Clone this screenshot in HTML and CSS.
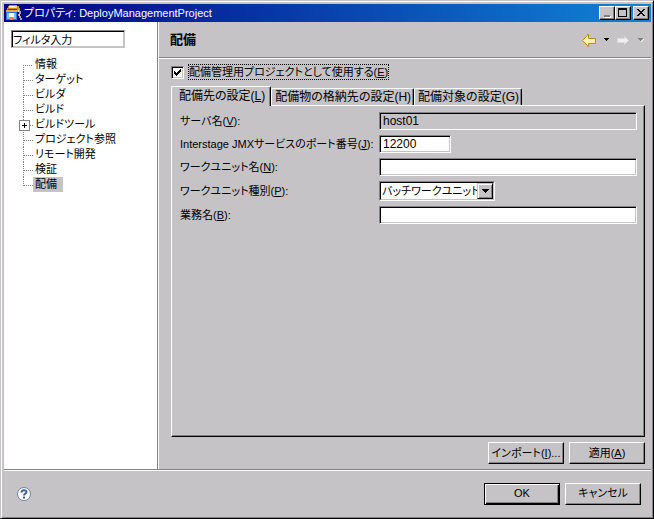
FILE: index.html
```html
<!DOCTYPE html>
<html lang="ja">
<head>
    <meta charset="UTF-8">
    <meta name="viewport" content="width=device-width, initial-scale=1.0">
    <title>プロパティ: DeployManagementProject</title>
    <link rel="stylesheet" href="styles.css">
</head>
<body>
    <div class="window">
        <header class="titlebar">
            <svg class="app-icon" width="16" height="16" viewBox="0 0 16 16" shape-rendering="crispEdges" aria-hidden="true">
                <path fill="#c89020" d="M3 0h8v1h2v2h1v3H1V3h1V1h1z"/>
                <path fill="#f8e080" d="M3 1h8v2H3z"/>
                <path fill="#fff8d0" d="M4 1h5v1H4z"/>
                <path fill="#604010" d="M2 4h9v1H2z"/>
                <path fill="#f0a840" d="M0 5h11v2H0z"/>
                <path fill="#2878d8" d="M0 7h11v8H0z"/>
                <path fill="#70c0f8" d="M1 8h9v6H1z"/>
                <path fill="#fff" d="M3 8h5v4H3z"/>
                <path fill="#e88820" d="M4 12h3v3H4z"/>
                <path fill="#a0a0a0" d="M11 4h3v2h1v3h-2V7h-2zM12 9h2v2h1v2h1v2h-2v-2h-1v-2h-1z"/>
                <path fill="#e8e0c8" d="M12 5h1v2h-1zM13 9h1v2h-1z"/>
            </svg>
            <h1>プロパティ: DeployManagementProject</h1>
            <div class="window-buttons">
                <button type="button" aria-label="最小化">
                    <svg width="12" height="10" shape-rendering="crispEdges"><path fill="#fff" d="M4 8h6v2H4z"/><path fill="#808080" d="M3 7h6v2H3z"/></svg>
                </button>
                <button type="button" aria-label="最大化">
                    <svg width="12" height="10" shape-rendering="crispEdges"><path fill="#000" fill-rule="evenodd" d="M1 0h9v9H1zM2 2v6h7V2z"/></svg>
                </button>
                <button type="button" class="close" aria-label="閉じる">
                    <svg width="12" height="10" shape-rendering="crispEdges"><path fill="#000" d="M2 1h2v1h1v1h2V2h1V1h2v1H9v1H8v1H7v1h1v1h1v1h1v1H8V7H7V6H5v1H4v1H2V7h1V6h1V5h1V4H4V3H3V2H2z"/></svg>
                </button>
            </div>
        </header>

        <div class="main">
            <nav class="sidebar">
                <input type="text" class="filter" value="フィルタ入力" aria-label="フィルタ入力">
                <ul class="tree">
                    <li><a href="#">情報</a></li>
                    <li><a href="#">ターゲット</a></li>
                    <li><a href="#">ビルダ</a></li>
                    <li><a href="#">ビルド</a></li>
                    <li class="expandable"><a href="#">ビルドツール</a></li>
                    <li><a href="#">プロジェクト参照</a></li>
                    <li><a href="#">リモート開発</a></li>
                    <li><a href="#">検証</a></li>
                    <li><a href="#" class="selected">配備</a></li>
                </ul>
            </nav>

            <section class="page">
                <div class="page-header">
                    <h2>配備</h2>
                    <div class="history">
                        <button type="button" aria-label="戻る">
                            <svg width="16" height="14" viewBox="0 0 16 14"><path fill="#fff0b0" stroke="#c08820" d="M1.5 7.500 6.500 2.500V1.500H7.500V5.500H14.500V10.500H7.500V13.500H6.500V12.500z"/></svg>
                        </button>
                        <button type="button" class="caret" aria-label="戻る履歴">
                            <svg width="6" height="4" shape-rendering="crispEdges"><path d="M0 0h5v1H4v1H3v1H2V2H1V1H0z"/></svg>
                        </button>
                        <button type="button" aria-label="進む" disabled>
                            <svg width="16" height="14" viewBox="0 0 16 14"><path fill="#f0eff0" stroke="#dcdadc" d="M13.500 7.500 9.500 3.500V5.500H2.500V9.500H9.500V11.500z"/></svg>
                        </button>
                        <button type="button" class="caret" aria-label="進む履歴" disabled>
                            <svg width="6" height="4" shape-rendering="crispEdges"><path fill="#fff" d="M5 1h1v1H5v1H4v1H3V3h1V2h1z"/><path fill="#808080" d="M0 0h5v1H4v1H3v1H2V2H1V1H0z"/></svg>
                        </button>
                    </div>
                </div>

                <form class="page-body">
                    <div class="use-project">
                        <input type="checkbox" id="useProject" checked>
                        <label for="useProject">配備管理用プロジェクトとして使用する(<u>E</u>)</label>
                    </div>

                    <div class="tabs" role="tablist">
                        <button type="button" role="tab" class="tab active" aria-selected="true">配備先の設定(<u>L</u>)</button>
                        <button type="button" role="tab" class="tab">配備物の格納先の設定(H)</button>
                        <button type="button" role="tab" class="tab">配備対象の設定(G)</button>
                    </div>
                    <div class="tab-panel" role="tabpanel">
                        <div class="fields">
                            <label for="server">サーバ名(<u>V</u>):</label>
                            <input type="text" id="server" value="host01" readonly>
                            <label for="port">Interstage JMXサービスのポート番号(<u>J</u>):</label>
                            <input type="text" id="port" class="short" value="12200">
                            <label for="workunit">ワークユニット名(<u>N</u>):</label>
                            <input type="text" id="workunit">
                            <label for="kind">ワークユニット種別(<u>P</u>):</label>
                            <div class="select">
                                <select id="kind">
                                    <option>バッチワークユニット</option>
                                </select>
                                <span class="select-arrow"><svg width="7" height="4" shape-rendering="crispEdges"><path d="M0 0h7v1H6v1H5v1H4v1H3V3H2V2H1V1H0z"/></svg></span>
                            </div>
                            <label for="job">業務名(<u>B</u>):</label>
                            <input type="text" id="job">
                        </div>
                    </div>

                    <div class="page-buttons">
                        <button type="button" class="btn">インポート(<u>I</u>)...</button>
                        <button type="button" class="btn">適用(<u>A</u>)</button>
                    </div>
                </form>
            </section>
        </div>

        <footer class="footer">
            <button type="button" class="help" aria-label="ヘルプ">
                <svg width="16" height="16" viewBox="0 0 16 16"><circle cx="8" cy="8" r="6.5" fill="#fff" stroke="#6d83a6"/><path fill="none" stroke="#3f5f92" stroke-width="2" d="M5.5 6.5C5.5 3.5 10.5 3.5 10.5 6 10.5 7.5 8 7.5 8 9.5"/><path fill="#3f5f92" d="M7 10.5h2v2H7z"/></svg>
            </button>
            <button type="button" class="btn default">OK</button>
            <button type="button" class="btn">キャンセル</button>
        </footer>
    </div>
</body>
</html>
```

FILE: styles.css
```css
* {
    box-sizing: border-box;
}
body {
    margin: 0;
    background-color: #c6c3c6;
}
body,
button,
input,
select {
    font-family: "Liberation Sans", "Noto Sans CJK JP", sans-serif;
    font-size: 11px;
    line-height: 15px;
    font-feature-settings: "palt";
    color: #000;
}
button {
    padding: 0;
    border: none;
    background: none;
    white-space: nowrap;
}
svg {
    display: block;
}
.window {
    display: flex;
    flex-direction: column;
    min-height: 100vh;
    padding: 2px;
    border: 1px solid;
    border-color: #c6c3c6 #000 #000 #c6c3c6;
    box-shadow: inset 1px 1px #fff, inset -1px -1px #848284;
}

/* title bar */
.titlebar {
    display: flex;
    align-items: center;
    height: 18px;
    margin: 1px 0 0 1px;
    padding: 0 2px;
    background: linear-gradient(to right, #000084, #1084d6);
}
.titlebar h1 {
    flex: 1;
    margin: 0 0 0 2px;
    font-size: 11px;
    font-weight: normal;
    color: #fff;
}
.window-buttons {
    display: flex;
}
.window-buttons button {
    width: 16px;
    height: 14px;
    padding: 1px;
    background-color: #c6c3c6;
    border: 1px solid;
    border-color: #fff #000 #000 #fff;
    box-shadow: inset -1px -1px #848284;
}
.window-buttons .close {
    margin-left: 2px;
}

/* left tree */
.main {
    display: flex;
    flex: 1;
    margin-left: 1px;
    border-bottom: 1px solid #848284;
}
.sidebar {
    width: 154px;
    padding: 8px 7px;
    background-color: #fff;
    border-right: 1px solid #848284;
}
input[type="text"] {
    width: 100%;
    height: 18px;
    padding: 0 3px;
    font-size: 12px;
    background-color: #fff;
    border: 1px solid;
    border-color: #848284 #fff #fff #848284;
    border-radius: 0;
    box-shadow: inset 1px 1px #000, inset -1px -1px #c6c3c6;
    outline: none;
}
input[type="text"].filter {
    display: block;
    width: 114px;
    padding: 0 1px;
    font-size: 11px;
    border-color: #848284 #c6c3c6 #c6c3c6 #848284;
}
.tree {
    margin: 9px 0 0 12px;
    padding: 0;
    list-style: none;
}
.tree li {
    position: relative;
    height: 15px;
    padding-left: 10px;
}
.tree li::before {
    content: "";
    position: absolute;
    left: 0;
    top: 0;
    width: 9px;
    height: 8px;
    border-left: 1px dotted #848284;
    border-bottom: 1px dotted #848284;
}
.tree li::after {
    content: "";
    position: absolute;
    left: 0;
    top: 8px;
    height: 7px;
    border-left: 1px dotted #848284;
}
.tree li:first-child::before {
    border-left: none;
}
.tree li:last-child::after {
    display: none;
}
.tree .expandable::after {
    left: -4px;
    top: 3px;
    width: 9px;
    height: 9px;
    border: 1px solid #848284;
    background:
        linear-gradient(#000, #000) center / 5px 1px no-repeat,
        linear-gradient(#000, #000) center / 1px 5px no-repeat,
        #fff;
}
.tree a {
    display: inline-block;
    height: 15px;
    padding: 0 6px 0 2px;
    color: #000;
    text-decoration: none;
    white-space: nowrap;
    vertical-align: top;
}
.tree .selected {
    background-color: #c6c3c6;
}

/* right page */
.page {
    display: flex;
    flex: 1;
    flex-direction: column;
    border-left: 1px solid #fff;
}
.page-header {
    display: flex;
    align-items: center;
    justify-content: space-between;
    height: 36px;
    padding: 0 7px 0 11px;
    border-bottom: 1px solid #848284;
    box-shadow: 0 1px #fff;
}
.page-header h2 {
    margin: 0;
    font-size: 13px;
    font-weight: bold;
}
.history {
    display: flex;
    align-items: center;
}
.history .caret {
    margin: 0 5px 0 7px;
}
.history .caret:last-child {
    margin-right: 0;
}
.page-body {
    display: flex;
    flex: 1;
    flex-direction: column;
    padding: 6px 6px 5px 12px;
}
.use-project {
    display: flex;
    align-items: center;
    gap: 4px;
}
.use-project input {
    appearance: none;
    width: 13px;
    height: 13px;
    margin: 0;
    background-color: #fff;
    border: 1px solid;
    border-color: #848284 #fff #fff #848284;
    box-shadow: inset 1px 1px #000, inset -1px -1px #c6c3c6;
}
.use-project input:checked {
    background-image: url("data:image/svg+xml,%3Csvg xmlns='http://www.w3.org/2000/svg' width='11' height='11' shape-rendering='crispEdges'%3E%3Cpath d='M2 4h1v1h1v1h1V5h1V4h1V3h1V2h1v3H8v1H7v1H6v1H5v1H4V8H3V7H2z'/%3E%3C/svg%3E");
}
.use-project label {
    height: 16px;
    line-height: 14px;
    border: 1px dotted #000;
}

/* tabs */
.tabs {
    display: flex;
    align-items: flex-end;
    margin-top: 6px;
}
.tab {
    height: 17px;
    padding: 0 2px 0 3px;
    font-size: 12px;
    border: 1px solid;
    border-color: #fff #000 transparent #fff;
    border-bottom: none;
    border-radius: 2px 2px 0 0;
    box-shadow: inset -1px 0 #848284;
}
.tab.active {
    position: relative;
    height: 20px;
    margin-bottom: -1px;
    padding: 0 5px 0 7px;
    background-color: #c6c3c6;
}
.tab-panel {
    flex: 1;
    padding: 6px 7px;
    border: 1px solid;
    border-color: #fff #000 #000 #fff;
    box-shadow: inset -1px -1px #848284;
}
.fields {
    display: grid;
    grid-template-columns: 200px 1fr;
    align-items: center;
    row-gap: 5px;
}
.fields label {
    padding-left: 1px;
    white-space: nowrap;
}
.fields input[readonly] {
    background-color: #c6c3c6;
}
input[type="text"].short {
    width: 72px;
}
.select {
    position: relative;
    width: 116px;
    height: 20px;
    border: 1px solid;
    border-color: #848284 #fff #fff #848284;
}
.select select {
    appearance: none;
    display: block;
    width: 100%;
    height: 18px;
    padding: 0 16px 0 1px;
    background-color: #fff;
    border: 1px solid;
    border-color: #000 #c6c3c6 #c6c3c6 #000;
    border-radius: 0;
}
.select-arrow {
    position: absolute;
    top: 1px;
    right: 1px;
    display: grid;
    place-items: center;
    width: 16px;
    height: 16px;
    background-color: #c6c3c6;
    border: 1px solid;
    border-color: #c6c3c6 #000 #000 #c6c3c6;
    box-shadow: inset 1px 1px #fff, inset -1px -1px #848284;
    pointer-events: none;
}

/* push buttons */
.btn {
    width: 76px;
    height: 22px;
    border: 1px solid;
    border-color: #fff #000 #000 #fff;
    box-shadow: inset -1px -1px #848284;
}
.btn.default {
    border-color: #000;
    box-shadow: inset 1px 1px #fff, inset -1px -1px #000, inset -2px -2px #848284;
}
.page-buttons {
    display: flex;
    justify-content: flex-end;
    gap: 5px;
    margin-top: 5px;
}
.footer {
    display: flex;
    align-items: center;
    gap: 5px;
    height: 46px;
    margin-left: 1px;
    padding: 0 10px 0 12px;
    border-top: 1px solid #fff;
}
.help {
    margin-right: auto;
}
```
